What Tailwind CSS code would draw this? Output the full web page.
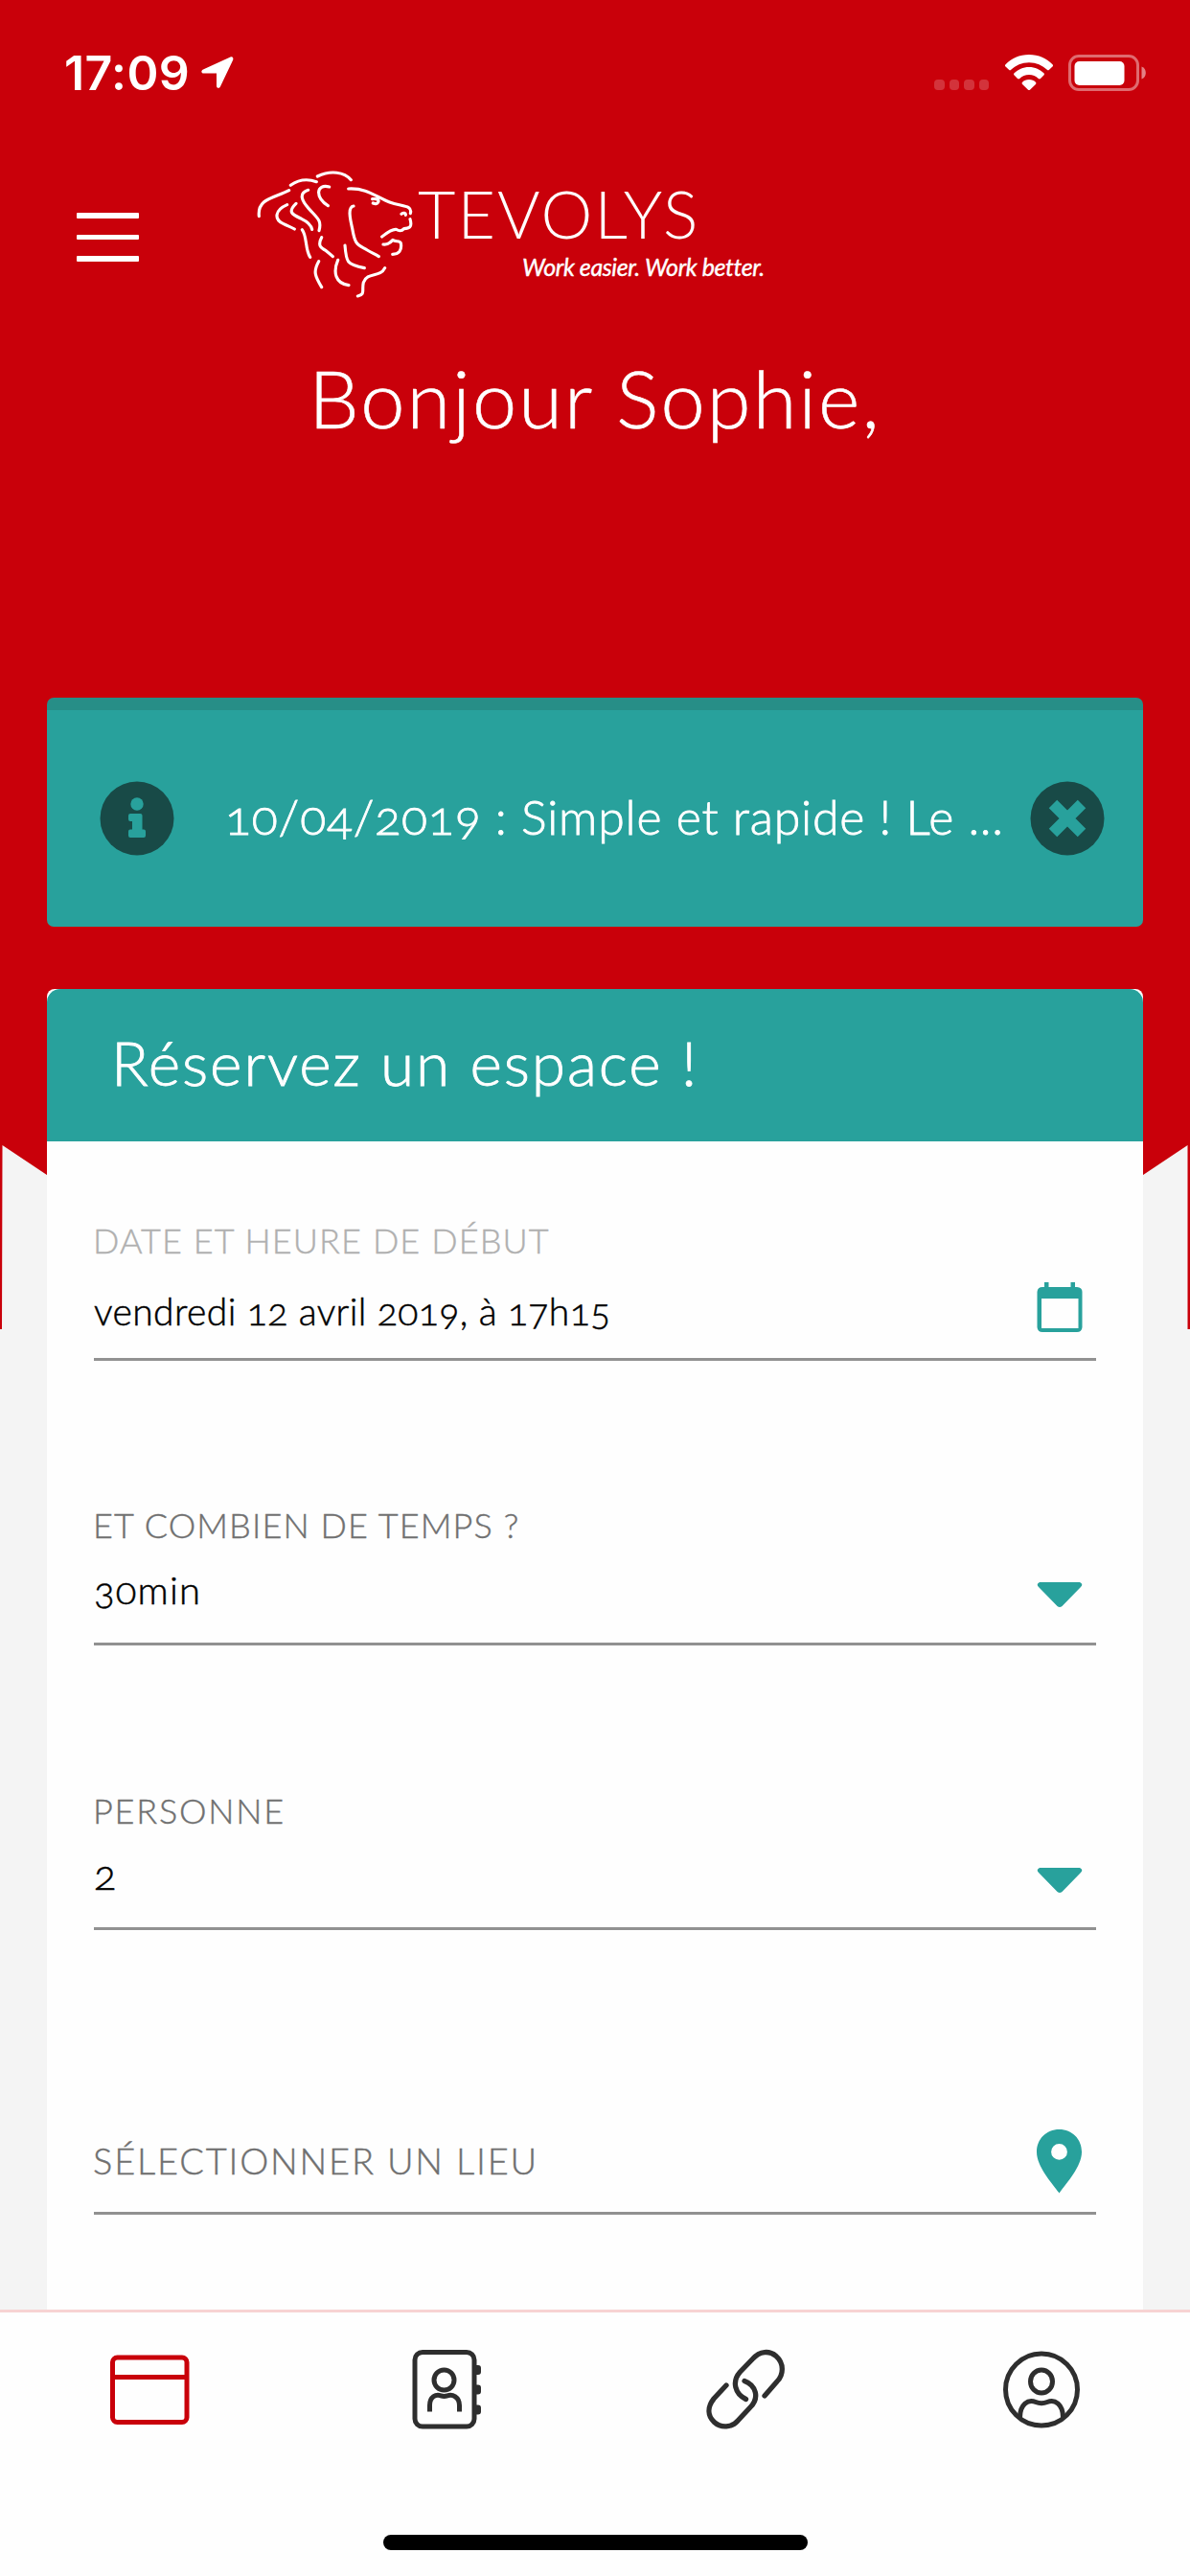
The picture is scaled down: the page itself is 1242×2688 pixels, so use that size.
<!DOCTYPE html>
<html lang="fr">
<head>
<meta charset="utf-8">
<title>Tevolys</title>
<script src="https://cdn.jsdelivr.net/npm/@tailwindcss/browser@4"></script>
</head>
<body class="w-[1242px] h-[2688px] overflow-hidden bg-[#f4f4f4] font-['Lato','Open_Sans',sans-serif]">
<div class="relative isolate flex h-[2688px] w-[1242px] flex-col overflow-hidden">
  <!-- red backdrop with its pointed lower edge -->
  <svg class="absolute left-0 top-0 -z-10" width="1242" height="1388" viewBox="0 0 1242 1388" fill="#c9000a"><path d="M0 0H1242V1387H1239.500V1195L621 1608 2.500 1195 2 1387H0Z"/></svg>

  <!-- status bar -->
  <div class="flex h-[152px] items-start justify-between pl-[67px] pr-[45px] pt-[46px] text-white">
    <div class="flex items-start">
      <span class="font-['Inter',sans-serif] text-[50px] font-semibold leading-[60px] tracking-[0.4px]">17:09</span>
      <svg class="ml-[11px] mt-[12px]" width="36" height="36" viewBox="0 0 36 36" fill="currentColor"><path d="M31.500 1.400 3 14.500C.500 15.800 1 18.500 3.500 18.500H17V31.500C17 34.300 20 34.500 21 32.200L34.200 4.500C35 2.200 33.500.600 31.500 1.400Z"/></svg>
    </div>
    <div class="flex items-start">
      <div class="mt-[37px] flex gap-[5px]">
        <i class="size-[10.500px] rounded-[4px] bg-white/20"></i><i class="size-[10.500px] rounded-[4px] bg-white/20"></i><i class="size-[10.500px] rounded-[4px] bg-white/20"></i><i class="size-[10.500px] rounded-[4px] bg-white/20"></i>
      </div>
      <svg class="ml-[16px] mt-[10px]" width="52" height="39" viewBox="0 0 52 39" fill="currentColor"><path d="M26 1C36 1 44.500 5 50.500 11.200 51.200 12 51.200 12.800 50.500 13.500L47 16.800C46.300 17.500 45.500 17.500 44.800 16.800 40 12.300 33.500 9.300 26 9.300S12 12.300 7.200 16.800C6.500 17.500 5.700 17.500 5 16.800L1.500 13.500C.800 12.800.800 12 1.500 11.200 7.500 5 16 1 26 1Z"/><path d="M26 14C32.300 14 37.500 16.500 41.400 20.300 42.100 21 42.100 21.800 41.400 22.500L38 25.900C37.300 26.600 36.500 26.500 35.800 25.900 33.200 23.600 29.900 22 26 22S18.800 23.600 16.200 25.900C15.500 26.500 14.700 26.600 14 25.900L10.600 22.500C9.900 21.800 9.900 21 10.600 20.300 14.500 16.500 19.700 14 26 14Z"/><path d="M26 27C28.900 27 31.300 28.100 32.900 29.700 33.600 30.400 33.500 31.200 32.900 31.900L27.200 37.500C26.400 38.300 25.600 38.300 24.800 37.500L19.100 31.900C18.500 31.200 18.400 30.400 19.100 29.700 20.700 28.100 23.100 27 26 27Z"/></svg>
      <svg class="ml-[14px] mt-[10px]" width="83" height="40" viewBox="0 0 83 40"><rect x="2.500" y="2.500" width="71" height="35" rx="9.500" fill="none" stroke="#fff" stroke-opacity=".42" stroke-width="3"/><rect x="7.500" y="8" width="52" height="25" rx="5" fill="#fff"/><path d="M77.500 13.500C83.300 15.500 83.300 24.500 77.500 26.500Z" fill="#fff" fill-opacity=".5"/></svg>
    </div>
  </div>

  <!-- app header -->
  <header class="flex h-[213px] items-start pl-[80px] pt-[8px] text-white">
    <div class="mt-[62px] flex w-[65px] flex-col gap-[17px]">
      <i class="h-[5.500px] rounded-[1px] bg-white"></i><i class="h-[5.500px] rounded-[1px] bg-white"></i><i class="h-[5.500px] rounded-[1px] bg-white"></i>
    </div>
    <svg class="ml-[105px] shrink-0" width="200" height="170" viewBox="0 0 600 510" fill="none" stroke="#fff" stroke-width="9.500" stroke-linecap="round" stroke-linejoin="round">
      <path d="M61 197C55 140 110 140 155 116M160 100C185 82 215 80 241 89M244 72C285 52 328 58 349 83M341 111C400 108 425 135 470 153 505 167 543 161 535 188M416 143C430 141 438 146 434 153 432 159 424 159 418 156M507 190C512 184 521 187 520 193M534 206C542 233 530 235 515 236 505 247 497 242 490 238 475 237 460 250 446 261M450 285C462 287 472 280 480 271 488 278 502 272 505 281 509 304 499 316 479 316M357 165C338 168 346 205 353 235 362 290 370 285 400 303 413 311 425 316 436 323M330 288C334 340 335 348 391 359M308 334C292 372 300 408 342 413M248 338C230 370 236 384 257 419M196 239C212 259 205 302 221 325M257 263C243 290 256 297 271 305 280 312 286 317 292 323M149 161C110 178 107 207 138 221 152 228 162 231 172 237M177 157C148 185 167 192 194 205 213 214 224 224 227 238M215 115C183 125 196 150 216 172 244 204 258 209 249 242M281 105C239 94 236 140 277 164M455 359C440 390 400 370 388 404 382 430 395 441 370 447"/>
    </svg>
    <div class="-ml-[14px] flex flex-col">
      <span class="mt-[30px] whitespace-nowrap text-[68px] font-light leading-[66px] tracking-[2.100px]">TEVOLYS</span>
      <span class="ml-[109px] mt-[10px] whitespace-nowrap text-[25px] italic leading-[25px] tracking-[-0.400px] [-webkit-text-stroke:0.4px_white]">Work easier. Work better.</span>
    </div>
  </header>
  <h1 class="h-[363px] text-center text-[83px] font-light leading-[100px] tracking-[2.100px] text-white [-webkit-text-stroke:0.6px_white]">Bonjour Sophie,</h1>

  <main class="flex flex-col px-[49px]">
    <section class="flex h-[239px] w-[1144px] items-center rounded-[7px] border-t-[13px] border-[#278e87] bg-[#28a19c] pl-[55px] text-white">
      <svg class="shrink-0" width="78" height="78" viewBox="0 0 78 78"><circle cx="39" cy="39" r="38.500" fill="#184a47"/><circle cx="39" cy="24" r="6.700" fill="#28a19c"/><path d="M32 34H42.500Q44.500 34 44.500 36V50.500H46Q48 50.500 48 52.500V57Q48 59 46 59H32Q30 59 30 57V52.500Q30 50.500 32 50.500H34V42H32Q30 42 30 40V36Q30 34 32 34Z" fill="#28a19c"/></svg>
      <span class="ml-[53px] w-[840px] whitespace-nowrap pb-[4px] text-[50px] font-light leading-[60px] tracking-[0.800px] oldstyle-nums [-webkit-text-stroke:0.8px_white]">10/04/2019 : Simple et rapide ! Le ...</span>
      <svg class="shrink-0" width="78" height="78" viewBox="0 0 78 78"><circle cx="39" cy="39" r="38.500" fill="#184a47"/><path d="M24 24 54 54M54 24 24 54" stroke="#28a19c" stroke-width="12"/></svg>
    </section>

    <section class="mt-[65px] h-[1378px] w-[1144px] rounded-t-[8px] bg-[#fefefe]">
      <h2 class="h-[159px] rounded-t-[14px] bg-[#28a19c] pl-[67px] pt-[34px] text-[64px] font-light leading-[86px] tracking-[1.900px] text-white [-webkit-text-stroke:0.8px_white]">Réservez un espace !</h2>
      <div class="flex flex-col px-[49px]">
        <div class="relative flex h-[229px] flex-col border-b-[3px] border-[#919191] pt-[81px]">
          <span class="-ml-px text-[36px] font-light leading-[44px] tracking-[1.100px] text-[#b0b0b0] [-webkit-text-stroke:0.4px_#b0b0b0]">DATE ET HEURE DE DÉBUT</span>
          <span class="mt-[28px] text-[39px] font-light leading-[48px] tracking-[0.400px] text-black oldstyle-nums [-webkit-text-stroke:0.5px_black]">vendredi 12 avril 2019, à 17h15</span>
          <svg class="absolute right-[14px] top-[147px]" width="48" height="53" viewBox="0 0 48 53" fill="#28a19c"><path fill-rule="evenodd" d="M8 0H12.500V5H35.500V0H40V5H42Q47.500 5.500 47.500 10V47Q47 52 42 52H6Q1 52 .500 47V10Q1 5 6 5H8ZM5 17V48H43.500V17Z"/></svg>
        </div>
        <div class="relative flex h-[297px] flex-col border-b-[3px] border-[#919191] pt-[149px]">
          <span class="-ml-px text-[36px] font-light leading-[44px] tracking-[1.100px] text-[#707070] [-webkit-text-stroke:0.4px_#707070]">ET COMBIEN DE TEMPS ?</span>
          <span class="mt-[22px] text-[40px] font-light leading-[48px] tracking-[1.200px] text-black oldstyle-nums [-webkit-text-stroke:0.5px_black]">30min</span>
          <svg class="absolute right-[14px] top-[231px]" width="48" height="27" viewBox="0 0 48 27" fill="#28a19c"><path d="M3 0H45Q49 2 46 5L26.500 25Q24 27 21.500 25L2 5Q-1 2 3 0Z"/></svg>
        </div>
        <div class="relative flex h-[297px] flex-col border-b-[3px] border-[#919191] pt-[150px]">
          <span class="-ml-px text-[36px] font-light leading-[44px] tracking-[1.800px] text-[#707070] [-webkit-text-stroke:0.4px_#707070]">PERSONNE</span>
          <span class="mt-[21px] text-[43px] font-light leading-[48px] text-black oldstyle-nums [-webkit-text-stroke:0.5px_black]">2</span>
          <svg class="absolute right-[14px] top-[232px]" width="48" height="27" viewBox="0 0 48 27" fill="#28a19c"><path d="M3 0H45Q49 2 46 5L26.500 25Q24 27 21.500 25L2 5Q-1 2 3 0Z"/></svg>
        </div>
        <div class="relative flex h-[297px] flex-col border-b-[3px] border-[#919191] pt-[217px]">
          <span class="-ml-px text-[38px] font-light leading-[46px] tracking-[1.800px] text-[#707070] [-webkit-text-stroke:0.4px_#707070]">SÉLECTIONNER UN LIEU</span>
          <svg class="absolute right-[15px] top-[208px]" width="47" height="67" viewBox="0 0 47 67" fill="#28a19c"><path fill-rule="evenodd" d="M23.500 0C37 0 47 10 47 23.500 47 39 31 56 23.500 66.500 16 56 0 39 0 23.500 0 10 10 0 23.500 0ZM23.500 15A8.400 8.400 0 1 0 23.500 31.800 8.400 8.400 0 1 0 23.500 15Z"/></svg>
        </div>
      </div>
    </section>
  </main>

  <!-- tab bar -->
  <nav class="flex h-[278px] shrink-0 flex-col items-center border-t-[3px] border-[#f7d3d3] bg-[#fefefe]">
    <div class="flex h-[232px] w-full justify-between pl-[112px] pr-[111px] pt-[36px] text-[#2e2e2e]">
      <svg width="88" height="88" viewBox="0 0 88 88" fill="none" stroke="#c9000a" stroke-width="5"><rect x="5.500" y="11" width="77.500" height="67.500" rx="5"/><path d="M5.500 31.500H83"/></svg>
      <svg width="88" height="88" viewBox="0 0 88 88" fill="none" stroke="currentColor" stroke-width="5"><rect x="11" y="5.500" width="62" height="77.500" rx="8"/><circle cx="41.500" cy="34.500" r="10.500"/><path d="M26.500 67.500V61C26.500 52 33 49 38 50.800Q41.500 52 45 50.800C50 49 57.500 52 57.500 61V67.500"/><path stroke="none" fill="currentColor" d="M74 19H77Q80 19 80 22V26Q80 29 77 29H74ZM74 39.500H77Q80 39.500 80 42.500V46.500Q80 49.500 77 49.500H74ZM74 60.500H77Q80 60.500 80 63.500V67.500Q80 70.500 77 70.500H74Z"/></svg>
      <svg width="88" height="88" viewBox="0 0 88 88" fill="none" stroke="currentColor" stroke-width="5.300" stroke-linecap="round"><path d="M45.500 54.500C34 49 30.500 36 39.500 26L52.500 12.500C60 4 70 3.500 77 9.500 85.500 17 85 29 78 36L65 51M25 40 12 54C5 63 5.500 72 12.500 78.500 19.500 85 31 84 37 77L50 63C60 53 56 40 44 35.500"/></svg>
      <svg width="88" height="88" viewBox="0 0 88 88" fill="none" stroke="currentColor" stroke-width="5"><circle cx="44" cy="44.500" r="37.500"/><ellipse cx="44" cy="36" rx="11.500" ry="12"/><path d="M21.500 73.500C21.500 60 30 54 38 57.500Q44 60 50 57.500C58 54 66.500 60 66.500 73.500"/></svg>
    </div>
    <div class="h-[16px] w-[443px] rounded-full bg-black"></div>
  </nav>
</div>
</body>
</html>
